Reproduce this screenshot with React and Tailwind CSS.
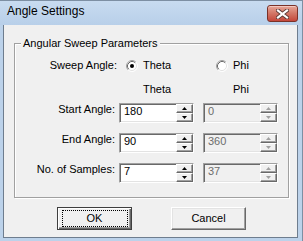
import React from "react";

function Radio({ checked }) {
  return (
    <svg width="12" height="12" viewBox="0 0 12 12" className="shrink-0">
      <circle cx="6" cy="6" r="5" fill="#ffffff" />
      <path d="M9.89 2.11 A5.5 5.5 0 0 0 2.11 9.89" stroke="#a0a0a0" strokeWidth="1" fill="none" />
      <path d="M2.11 9.89 A5.5 5.5 0 0 0 9.89 2.11" stroke="#ffffff" strokeWidth="1" fill="none" />
      <path d="M9.18 2.82 A4.5 4.5 0 0 0 2.82 9.18" stroke="#696969" strokeWidth="1" fill="none" />
      <path d="M2.82 9.18 A4.5 4.5 0 0 0 9.18 2.82" stroke="#e3e3e3" strokeWidth="1" fill="none" />
      {checked && <circle cx="6" cy="6" r="2" fill="#000000" />}
    </svg>
  );
}

function Arrow({ up, disabled }) {
  return (
    <svg width="5" height="3" viewBox="0 0 5 3">
      {up ? (
        <path d="M0 3 L5 3 L2.5 0 Z" fill={disabled ? "#a0a0a0" : "#000000"} />
      ) : (
        <path d="M0 0 L5 0 L2.5 3 Z" fill={disabled ? "#a0a0a0" : "#000000"} />
      )}
    </svg>
  );
}

function SpinBtn({ up, disabled }) {
  return (
    <div className="h-[9px] w-[17px] bg-[#f0f0f0] border-t border-l border-t-[#ffffff] border-l-[#ffffff] border-b border-r border-b-[#696969] border-r-[#696969] shadow-[inset_-1px_-1px_0_#a0a0a0] flex items-center justify-center">
      <Arrow up={up} disabled={disabled} />
    </div>
  );
}

function SpinBox({ value, disabled }) {
  return (
    <div
      className={
        "w-[75px] h-[20px] flex border border-t-[#a0a0a0] border-l-[#a0a0a0] border-b-[#ffffff] border-r-[#ffffff] shadow-[inset_1px_1px_0_#696969,inset_-1px_-1px_0_#e3e3e3] " +
        (disabled ? "bg-[#f0f0f0]" : "bg-white")
      }
    >
      <div className={"flex-1 pl-[4px] pt-[1px] " + (disabled ? "text-[#6d6d6d]" : "text-black")}>{value}</div>
      <div className="flex flex-col">
        <SpinBtn up disabled={disabled} />
        <SpinBtn disabled={disabled} />
      </div>
    </div>
  );
}

function Row({ label, theta, phi }) {
  return (
    <div className="flex h-[20px] mt-[10px] first:mt-0">
      <div className="w-[100px] text-right pt-[0px]">{label}</div>
      <div className="ml-[4px]">
        <SpinBox value={theta} />
      </div>
      <div className="ml-[9px]">
        <SpinBox value={phi} disabled />
      </div>
    </div>
  );
}

export default function App() {
  return (
    <div className="w-[303px] h-[241px] bg-[#bcd2ea] flex flex-col overflow-hidden font-['Liberation_Sans',Arial,sans-serif] text-[11px] leading-[13px] text-black border-t border-r border-[#7d8fa3]">
      {/* Title bar */}
      <div className="h-[24px] shrink-0 flex justify-between bg-gradient-to-b from-[#c8dbf0] to-[#b8cfe9]">
        <div className="pl-[7px] pt-[3px] text-[12px] leading-[15px] text-black">Angle Settings</div>
        <div className="pt-[4px] pr-[4px]">
          <div className="w-[31px] h-[17px] rounded-[3px] border border-[#7a3128] bg-gradient-to-b from-[#e6a597] via-[#d27565] to-[#c4463a] shadow-[inset_0_1px_0_#f3c8bf] flex items-center justify-center">
            <svg width="13" height="10" viewBox="0 0 13 10">
              <path d="M2 1.5 L11 8.5 M11 1.5 L2 8.5" stroke="#5b3a36" strokeWidth="4" strokeLinecap="square" />
              <path d="M2 1.5 L11 8.5 M11 1.5 L2 8.5" stroke="#ffffff" strokeWidth="2.2" strokeLinecap="square" />
            </svg>
          </div>
        </div>
      </div>

      {/* Client */}
      <div className="flex-1 ml-[3px] mr-[4px] mb-[3px] border-x border-b border-[#6e7d8e] bg-[#f0f0f0] flex flex-col">
        {/* Group box */}
        <div className="relative ml-[10px] mt-[18px] w-[275px] h-[155px] border border-[#a0a0a0] shadow-[inset_1px_1px_0_#ffffff,1px_1px_0_#ffffff] flex flex-col">
          <div className="absolute left-[6px] top-[-7px] px-[2px] bg-[#f0f0f0]">Angular Sweep Parameters</div>

          {/* Sweep angle row */}
          <div className="flex items-center h-[13px] mt-[15px]">
            <div className="w-[102px] text-right">Sweep Angle:</div>
            <div className="ml-[9px] w-[90px] flex items-center">
              <Radio checked />
              <span className="ml-[5px]">Theta</span>
            </div>
            <div className="flex items-center">
              <Radio />
              <span className="ml-[5px]">Phi</span>
            </div>
          </div>

          {/* Header row */}
          <div className="flex h-[13px] mt-[11px]">
            <div className="ml-[128px] w-[90px]">Theta</div>
            <div>Phi</div>
          </div>

          <div className="mt-[7px] flex flex-col">
            <Row label="Start Angle:" theta="180" phi="0" />
            <Row label="End Angle:" theta="90" phi="360" />
            <Row label="No. of Samples:" theta="7" phi="37" />
          </div>
        </div>

        {/* Buttons */}
        <div className="flex mt-[9px] ml-[53px]">
          <button className="relative w-[75px] h-[23px] bg-[#f0f0f0] border border-[#3f3f3f] shadow-[inset_1px_1px_0_#ffffff,inset_-1px_-1px_0_#696969,inset_-2px_-2px_0_#a0a0a0] flex items-center justify-center">
            <span className="absolute left-[4px] top-[2px] right-[3px] bottom-[2px] border border-dotted border-black"></span>
            <span>OK</span>
          </button>
          <button className="ml-[39px] w-[75px] h-[23px] bg-[#f0f0f0] border border-t-[#ffffff] border-l-[#ffffff] border-b-[#696969] border-r-[#696969] shadow-[inset_-1px_-1px_0_#a0a0a0,inset_1px_1px_0_#e3e3e3] flex items-center justify-center">
            <span>Cancel</span>
          </button>
        </div>
      </div>
    </div>
  );
}
